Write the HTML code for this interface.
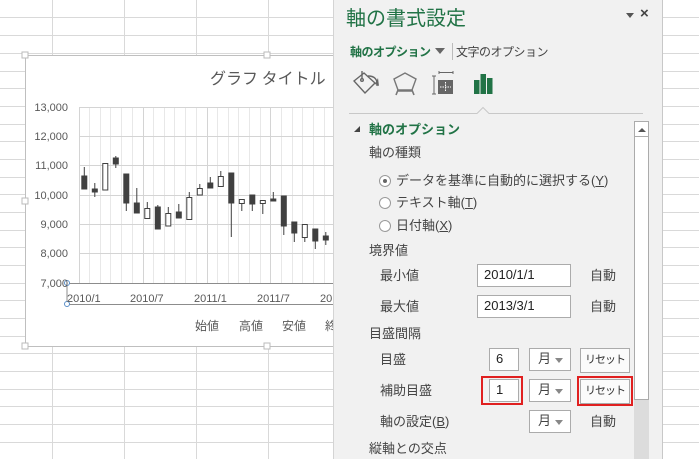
<!DOCTYPE html>
<html><head><meta charset="utf-8"><style>
*{margin:0;padding:0;box-sizing:border-box}
body{width:699px;height:459px;overflow:hidden;background:#fff;position:relative;font-family:"Liberation Sans","Noto Sans CJK JP",sans-serif;color:#444}
.abs{position:absolute}
#panel{position:absolute;left:333px;top:0;width:330px;height:459px;background:#f1f1f1;border-left:1px solid #d4d4d4;border-right:1px solid #c8c8c8}
.t{position:absolute;font-size:13px;color:#444;white-space:nowrap;line-height:16px}
.box{position:absolute;background:#fff;border:1px solid #ababab;font-size:13px;color:#222;padding-left:6px;line-height:20px}
.sel{position:absolute;background:#fff;border:1px solid #ababab;font-size:13px;color:#444;padding-left:8px;line-height:20px}
.sel:after{content:"";position:absolute;right:7px;top:9px;border-left:4px solid transparent;border-right:4px solid transparent;border-top:5px solid #888}
.btn{position:absolute;background:#fbfbfb;border:1px solid #ababab;font-size:11px;color:#333;text-align:center;line-height:22px;letter-spacing:-1px}
.red{position:absolute;border:2px solid #e02020}
.radio{position:absolute;width:12px;height:12px;border:1px solid #999;border-radius:50%;background:#fff}
</style></head><body>
<svg class="abs" style="left:0;top:0" width="699" height="459">
<g stroke="#d9d9d9" stroke-width="1">
<path d="M0 17.5H699M0 35.5H699M0 53.5H699M0 71.5H699M0 88.5H699M0 106.5H699M0 124.5H699M0 141.5H699M0 159.5H699M0 177.5H699M0 194.5H699M0 212.5H699M0 230.5H699M0 247.5H699M0 265.5H699M0 283.5H699M0 300.5H699M0 318.5H699M0 336.5H699M0 353.5H699M0 371.5H699M0 389.5H699M0 406.5H699M0 424.5H699M0 442.5H699"/>
<path d="M52.5 0V459M124.5 0V459M196.5 0V459M268.5 0V459"/>
</g>
<rect x="25.5" y="55.5" width="320" height="291" fill="#fff" stroke="#bfbfbf"/>
<g stroke="#e8e8e8"><path d="M89.5 107V283M100.5 107V283M110.5 107V283M121.5 107V283M132.5 107V283M153.5 107V283M164.5 107V283M174.5 107V283M185.5 107V283M196.5 107V283M217.5 107V283M228.5 107V283M238.5 107V283M249.5 107V283M260.5 107V283M281.5 107V283M292.5 107V283M302.5 107V283M313.5 107V283M324.5 107V283"/></g>
<g stroke="#d4d4d4"><path d="M79.5 107V283M143.5 107V283M207.5 107V283M270.5 107V283"/>
<path d="M79 107.5H340M79 136.5H340M79 165.5H340M79 195.5H340M79 224.5H340M79 253.5H340"/></g>
<path d="M67 283.5H340M67 283V304M67 304.5H340" stroke="#8c8c8c" fill="none"/>
<circle cx="67" cy="283" r="2.5" fill="#fff" stroke="#5b8fc8"/><circle cx="67" cy="304" r="2.5" fill="#fff" stroke="#5b8fc8"/>
<g fill="#fff" stroke="#bbb"><rect x="22" y="52" width="6" height="6"/><rect x="264" y="52" width="6" height="6"/><rect x="22" y="198" width="6" height="6"/><rect x="22" y="343" width="6" height="6"/><rect x="264" y="343" width="6" height="6"/></g>
<g font-size="11" fill="#595959" text-anchor="end" font-family="Liberation Sans">
<text x="68" y="111">13,000</text><text x="68" y="140">12,000</text><text x="68" y="169">11,000</text><text x="68" y="199">10,000</text><text x="68" y="228">9,000</text><text x="68" y="257">8,000</text><text x="68" y="287">7,000</text></g>
<g font-size="11" fill="#595959" font-family="Liberation Sans"><text x="67" y="302">2010/1</text><text x="130" y="302">2010/7</text><text x="194" y="302">2011/1</text><text x="257" y="302">2011/7</text><text x="320" y="302">2011</text></g>
<text x="210" y="84" font-size="16" fill="#595959" font-family="Noto Sans CJK JP">グラフ タイトル</text>
<g font-size="12" fill="#595959" font-family="Noto Sans CJK JP"><text x="195" y="330">始値</text><text x="239" y="330">高値</text><text x="282" y="330">安値</text><text x="325" y="330">終値</text></g>
<g stroke="#404040" stroke-width="1" fill="#404040">
<path d="M84.3 167V189M94.8 183V197M115.8 156V168M126.3 174V211M136.8 188V213M147.3 202V218M157.8 205V229M168.3 207V226M178.8 204V218M189.3 192V219M199.8 184V195M210.3 177V188M220.8 171V186M231.3 173V237M241.8 199V211M252.3 195V211M262.8 200V214M273.3 192V200M283.8 196V235M294.3 222V242M304.8 224V242M315.3 229V249M325.8 232V245"/>
<rect x="81.8" y="176" width="5" height="13"/><rect x="92.3" y="189" width="5" height="3"/><rect x="113.3" y="158" width="5" height="6"/><rect x="123.8" y="174" width="5" height="29"/><rect x="134.3" y="203" width="5" height="10"/><rect x="155.3" y="207" width="5" height="22"/><rect x="176.3" y="212" width="5" height="6"/><rect x="207.8" y="183" width="5" height="5"/><rect x="228.8" y="173" width="5" height="30"/><rect x="249.8" y="195" width="5" height="9"/><rect x="270.8" y="199" width="5" height="2"/><rect x="281.3" y="196" width="5" height="30"/><rect x="291.8" y="222" width="5" height="11"/><rect x="312.8" y="229" width="5" height="12"/><rect x="323.3" y="236" width="5" height="4"/>
</g>
<g stroke="#404040" fill="#fff"><rect x="102.8" y="163.5" width="5" height="26.5"/><rect x="144.8" y="208.5" width="5" height="10"/><rect x="165.8" y="213.5" width="5" height="12.5"/><rect x="186.8" y="197.5" width="5" height="22"/><rect x="197.3" y="188.5" width="5" height="6.5"/><rect x="218.3" y="176.5" width="5" height="10"/><rect x="239.3" y="199.5" width="5" height="4"/><rect x="260.3" y="200.5" width="5" height="3"/><rect x="302.3" y="224.5" width="5" height="13"/></g>
</svg>

<div id="panel">
<div class="t" style="left:12px;top:6px;font-size:20px;line-height:26px;color:#217346">軸の書式設定</div>
<div class="abs" style="left:292px;top:13px;border-left:4px solid transparent;border-right:4px solid transparent;border-top:5px solid #555"></div>
<div class="t" style="left:306px;top:6px;font-size:15px;font-weight:bold;color:#444">×</div>
<div class="t" style="left:16px;top:44px;font-size:12px;font-weight:bold;color:#217346;letter-spacing:-0.5px">軸のオプション</div>
<div class="abs" style="left:101px;top:48px;border-left:5px solid transparent;border-right:5px solid transparent;border-top:6px solid #666"></div>
<div class="abs" style="left:118px;top:43px;width:1px;height:17px;background:#bbb"></div>
<div class="t" style="left:122px;top:44px;font-size:12px;letter-spacing:-0.5px">文字のオプション</div>
<svg class="abs" style="left:0;top:66px" width="180" height="40">
<g fill="none" stroke="#666" stroke-width="1.4"><path d="M20 15L30 7L41 17L31 27Z"/><path d="M28 5V13"/><circle cx="28" cy="14" r="1.3"/><path d="M34 10Q44 10 43 20"/></g>
<path d="M41 18L44 12L45 20Z" fill="#666"/>
<path d="M60 13L71 7L82 13L78 24H64Z" fill="none" stroke="#777" stroke-width="1.4"/><path d="M64 24L62 29M78 24L80 29M64 25H78" stroke="#777" stroke-width="1.6"/>
<path d="M98 10H102M100 10V28M98 28H102M105 8V5M119 8V5M105 6.5H119" stroke="#666" stroke-width="1"/><rect x="104" y="14" width="15" height="14" fill="#666"/><path d="M111.5 16V26M106 21H117" stroke="#fff" stroke-width="1" stroke-dasharray="1.5 1"/>
<g fill="#217346"><rect x="140" y="14" width="5.5" height="14"/><rect x="146.5" y="8" width="5.5" height="20"/><rect x="153" y="12" width="5.5" height="16"/></g>
</svg>
<svg class="abs" style="left:0;top:105px" width="330" height="12"><path d="M15 8.5H143L149 2.5L155 8.5H309" fill="none" stroke="#c8c8c8"/></svg>
<div class="abs" style="left:20px;top:126px;border-left:6px solid transparent;border-bottom:6px solid #444"></div>
<div class="t" style="left:35px;top:122px;font-weight:bold;color:#217346">軸のオプション</div>
<div class="t" style="left:35px;top:145px">軸の種類</div>
<div class="radio" style="left:45px;top:175px"></div><div class="abs" style="left:49px;top:179px;width:4px;height:4px;border-radius:50%;background:#666"></div>
<div class="t" style="left:62px;top:173px">データを基準に自動的に選択する(<u>Y</u>)</div>
<div class="radio" style="left:45px;top:197px"></div><div class="t" style="left:62px;top:195px">テキスト軸(<u>T</u>)</div>
<div class="radio" style="left:45px;top:220px"></div><div class="t" style="left:62px;top:218px">日付軸(<u>X</u>)</div>
<div class="t" style="left:35px;top:243px">境界値</div>
<div class="t" style="left:46px;top:268px">最小値</div>
<div class="box" style="left:143px;top:264px;width:94px;height:23px">2010/1/1</div>
<div class="t" style="left:256px;top:268px">自動</div>
<div class="t" style="left:46px;top:299px">最大値</div>
<div class="box" style="left:143px;top:295px;width:94px;height:23px">2013/3/1</div>
<div class="t" style="left:256px;top:299px">自動</div>
<div class="t" style="left:35px;top:326px">目盛間隔</div>
<div class="t" style="left:46px;top:352px">目盛</div>
<div class="box" style="left:155px;top:348px;width:30px;height:23px">6</div>
<div class="sel" style="left:195px;top:348px;width:42px;height:23px">月</div>
<div class="btn" style="left:246px;top:348px;width:50px;height:25px">リセット</div>
<div class="t" style="left:46px;top:383px">補助目盛</div>
<div class="red" style="left:147px;top:376px;width:42px;height:29px"></div>
<div class="box" style="left:155px;top:379px;width:30px;height:23px">1</div>
<div class="sel" style="left:195px;top:379px;width:42px;height:23px">月</div>
<div class="red" style="left:243px;top:376px;width:56px;height:30px"></div>
<div class="btn" style="left:246px;top:379px;width:50px;height:25px">リセット</div>
<div class="t" style="left:46px;top:414px">軸の設定(<u>B</u>)</div>
<div class="sel" style="left:195px;top:410px;width:42px;height:23px">月</div>
<div class="t" style="left:256px;top:414px">自動</div>
<div class="t" style="left:35px;top:441px">縦軸との交点</div>
<div class="abs" style="left:300px;top:121px;width:15px;height:338px;background:#dcdcdc"></div>
<div class="abs" style="left:300px;top:121px;width:15px;height:279px;background:#fff;border:1px solid #ababab"></div>
<div class="abs" style="left:304px;top:128px;border-left:4px solid transparent;border-right:4px solid transparent;border-bottom:4px solid #555"></div>
<div class="abs" style="left:300px;top:136px;width:15px;height:1px;background:#ababab"></div>
</div>
</body></html>
